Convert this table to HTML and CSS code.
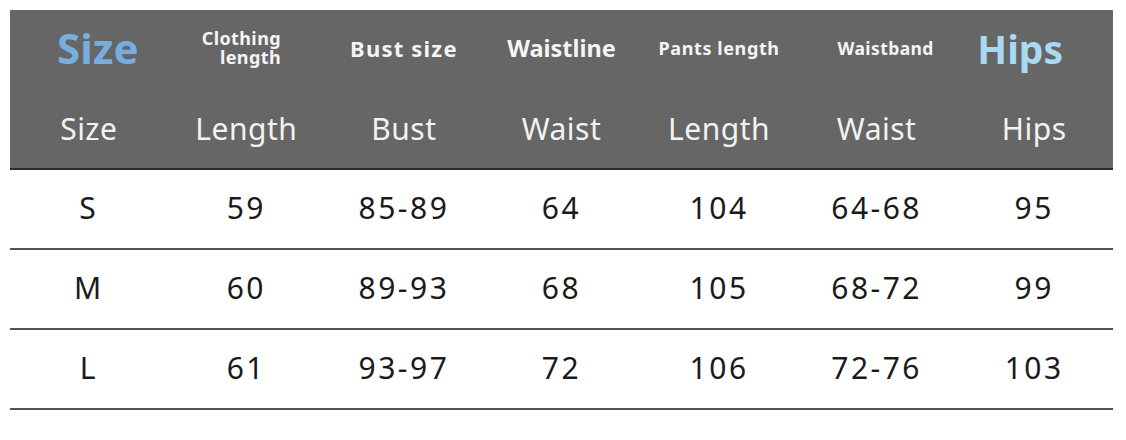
FILE: index.html
```html
<!DOCTYPE html>
<html>
<head>
<meta charset="utf-8">
<link rel="stylesheet" href="styles.css">
</head>
<body>
<div class="chart">
  <div class="head">
    <div class="row top">
      <div class="cell"><span class="big blue size">Size</span></div>
      <div class="cell"><span class="stack"><span class="line">Clothing</span><span class="line">length</span></span></div>
      <div class="cell"><span class="t-bust">Bust size</span></div>
      <div class="cell"><span class="t-waist">Waistline</span></div>
      <div class="cell"><span class="t-pants">Pants length</span></div>
      <div class="cell"><span class="t-band">Waistband</span></div>
      <div class="cell"><span class="big light hips">Hips</span></div>
    </div>
    <div class="row sub">
      <div class="cell">Size</div>
      <div class="cell">Length</div>
      <div class="cell">Bust</div>
      <div class="cell">Waist</div>
      <div class="cell">Length</div>
      <div class="cell">Waist</div>
      <div class="cell">Hips</div>
    </div>
  </div>
  <div class="row body">
    <div class="cell">S</div><div class="cell">59</div><div class="cell">85-89</div><div class="cell">64</div><div class="cell">104</div><div class="cell">64-68</div><div class="cell">95</div>
  </div>
  <div class="row body">
    <div class="cell">M</div><div class="cell">60</div><div class="cell">89-93</div><div class="cell">68</div><div class="cell">105</div><div class="cell">68-72</div><div class="cell">99</div>
  </div>
  <div class="row body">
    <div class="cell">L</div><div class="cell">61</div><div class="cell">93-97</div><div class="cell">72</div><div class="cell">106</div><div class="cell">72-76</div><div class="cell">103</div>
  </div>
</div>
</body>
</html>
```

FILE: styles.css
```css
html, body {
  margin: 0;
  padding: 0;
  background: #ffffff;
}
body {
  padding: 10px 0 0 10px;
  font-family: "Noto Sans", "Open Sans", sans-serif;
}
.chart {
  width: 1103px;
}
.head {
  background: #666666;
  border-bottom: 2px solid #2a2a2a;
}
.row {
  display: grid;
  grid-template-columns: repeat(7, 1fr);
  align-items: center;
}
.cell {
  display: flex;
  justify-content: center;
  align-items: center;
  height: 100%;
}
.top {
  height: 78px;
  padding-bottom: 2px;
  box-sizing: border-box;
  color: #f4f4f4;
  font-weight: 700;
}
.sub {
  height: 80px;
  color: #f2f2f2;
  font-size: 30px;
  letter-spacing: 0.5px;
}
.big {
  line-height: 1;
}
.blue {
  color: #78ade0;
  font-size: 42px;
}
.size {
  margin-left: 18px;
}
.light {
  color: #a9daf2;
  font-size: 39px;
}
.hips {
  margin-right: 28px;
}
.stack {
  display: flex;
  flex-direction: column;
  align-items: flex-end;
  font-size: 18px;
  margin-right: 10px;
  letter-spacing: 0.4px;
}
.line {
  line-height: 19px;
}
.t-bust {
  font-size: 22px;
  letter-spacing: 1.2px;
}
.t-waist {
  font-size: 23.5px;
}
.t-pants {
  font-size: 18px;
  letter-spacing: 0.6px;
}
.t-band {
  font-size: 17.5px;
  letter-spacing: 0.4px;
  margin-left: 18px;
}
.body {
  height: 80px;
  padding-bottom: 4px;
  box-sizing: border-box;
  border-bottom: 2px solid #555555;
  color: #1a1a1a;
  font-size: 30px;
  letter-spacing: 2.5px;
}
```
